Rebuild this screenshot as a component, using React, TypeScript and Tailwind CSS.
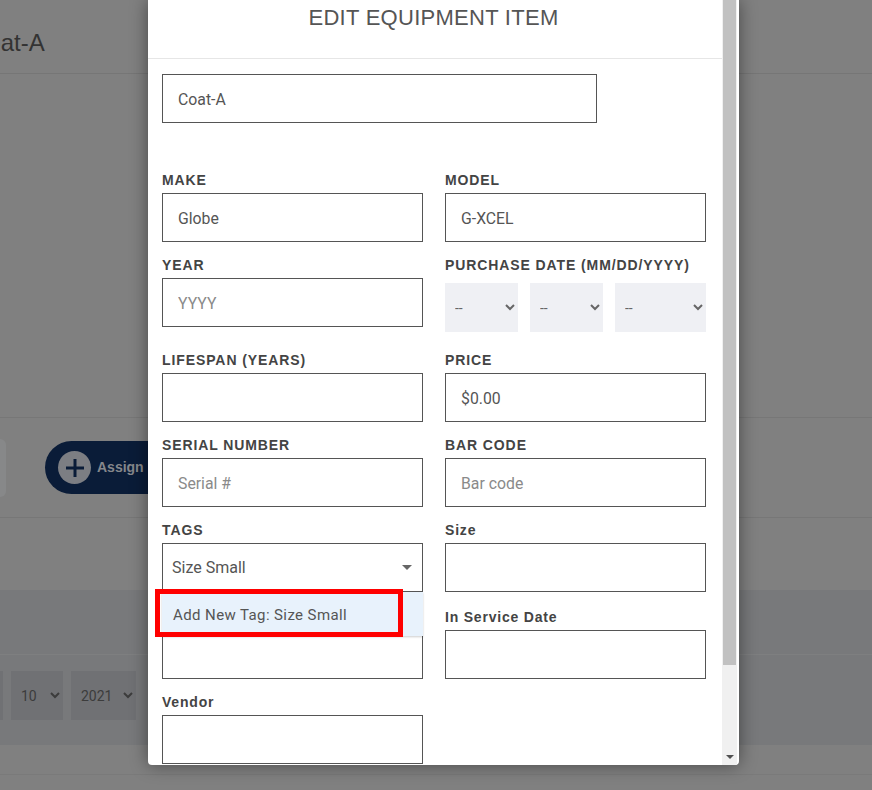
const sans = "font-['Liberation_Sans',Arial,sans-serif]";
const roboto = "font-['Roboto',Arial,sans-serif]";
const labelBase = `${sans} block pt-[2px] text-[14px] leading-[16px] font-bold text-[#444]`;
const inputBase = `${roboto} block h-[49px] border border-[#555] bg-white px-[15px] pt-[2px] text-[15.8px] text-[#555] outline-none`;

function Field({
  label,
  value,
  placeholder,
  labelClass = "uppercase tracking-[0.9px]",
}: {
  label?: string;
  value?: string;
  placeholder?: string;
  labelClass?: string;
}) {
  return (
    <div className="mb-[13px]">
      <label className={`${labelBase} ${labelClass} h-[23px]`}>{label}</label>
      <input
        readOnly
        value={value}
        placeholder={placeholder}
        className={`${inputBase} w-full placeholder:text-[#8a8a8a]`}
      />
    </div>
  );
}

function DateSelect({ className }: { className: string }) {
  return (
    <select className={`${roboto} h-[49px] bg-[#eff0f4] pl-[6px] text-[14px] text-[#666] outline-none ${className}`}>
      <option>--</option>
    </select>
  );
}

function PageBehind() {
  return (
    <div className={`${sans} h-[790px] overflow-hidden bg-[#808080]`}>
      <div className="h-[74px] border-b border-[#767676]">
        <h1 className="-ml-[30px] pt-[28px] text-[24px] leading-[30px] text-[#333]">Coat-A</h1>
      </div>
      <div className="h-[344px] border-b border-[#777]" />
      <div className="flex h-[100px] items-center gap-[39px] border-b border-[#777]">
        <div className="h-[58px] w-[6px] rounded-r-[6px] bg-[#878889]" />
        <button className="flex h-[53px] w-[180px] items-center gap-[6px] rounded-full bg-[#0a1c38] pl-[13px] text-[14px] font-bold whitespace-nowrap text-[#85878b]">
          <span className="flex h-[33px] w-[33px] shrink-0 items-center justify-center rounded-full bg-[#7c7e83]">
            <svg width="24" height="24" viewBox="0 0 24 24" fill="none" stroke="#0a1c38" strokeWidth="3">
              <path d="M12 3v18M3 12h18" />
            </svg>
          </span>
          Assign Item
        </button>
      </div>
      <div className="h-[72px]" />
      <div className="h-[155px] bg-[#78797b]">
        <div className="h-[65px] border-b border-[#7e7f80]" />
        <div className="flex gap-[8px] pt-[16px] text-[14px] text-[#3c3c3c]">
          <div className="h-[49px] w-[3px] bg-[#707174]" />
          <select className={`${roboto} h-[49px] w-[52px] bg-[#707174] pl-[6px] outline-none`}>
            <option>10</option>
          </select>
          <select className={`${roboto} h-[49px] w-[65px] bg-[#707174] pl-[6px] outline-none`}>
            <option>2021</option>
          </select>
        </div>
      </div>
      <div className="h-[30px] border-b border-[#7a7a7a]" />
    </div>
  );
}

function EditModal() {
  return (
    <div className="absolute top-0 left-[148px] flex h-[765px] w-[591px] overflow-hidden rounded-b-[4px] bg-white shadow-[0_0_18px_rgba(0,0,0,0.45)]">
      <div className="w-[574px] shrink-0">
        <h2 className={`${sans} h-[59px] border-b border-[#e6e6e6] pt-[5px] pr-[3px] text-center text-[22px] leading-[26px] tracking-[0.27px] text-[#555]`}>
          EDIT EQUIPMENT ITEM
        </h2>
        <div className="px-[14px] pt-[15px]">
          <input readOnly value="Coat-A" className={`${inputBase} mb-[47px] w-[435px]`} />
          <div className="grid w-[544px] grid-cols-[261px_261px] gap-x-[22px]">
            <Field label="Make" value="Globe" />
            <Field label="Model" value="G-XCEL" />
            <Field label="Year" placeholder="YYYY" />
            <div className="mb-[13px]">
              <label className={`${labelBase} h-[28px] tracking-[0.9px] uppercase`}>
                Purchase Date (MM/DD/YYYY)
              </label>
              <div className="mb-[5px] flex gap-[12px]">
                <DateSelect className="w-[73px]" />
                <DateSelect className="w-[73px]" />
                <DateSelect className="w-[91px]" />
              </div>
            </div>
            <Field label="Lifespan (Years)" />
            <Field label="Price" value="$0.00" />
            <Field label="Serial Number" placeholder="Serial #" />
            <Field label="Bar Code" placeholder="Bar code" />
            <div className="relative mb-[15px]">
              <label className={`${labelBase} h-[23px] tracking-[0.9px] uppercase`}>Tags</label>
              <div className={`${roboto} flex h-[49px] items-center justify-between border border-[#555] pr-[10px] pl-[9px] text-[16px] text-[#555]`}>
                Size Small
                <span className="h-0 w-0 border-x-[5px] border-t-[5px] border-x-transparent border-t-[#666]" />
              </div>
              <div className={`${roboto} absolute top-[72px] left-0 z-10 flex h-[44px] w-[261px] items-center bg-[#e8f2fc] pt-[2px] pl-[11px] text-[15px] tracking-[0.4px] text-[#555] shadow-[0_1px_2px_rgba(0,0,0,0.2)]`}>
                Add New Tag: Size Small
                <div className="absolute -top-[3px] -left-[7px] h-[48px] w-[248px] border-[5px] border-[#ff0000]" />
              </div>
            </div>
            <Field label="Size" labelClass="tracking-[0.8px]" />
            <Field />
            <Field label="In Service Date" labelClass="tracking-[0.8px]" />
            <Field label="Vendor" labelClass="tracking-[0.8px]" />
          </div>
        </div>
      </div>
      <div className="flex h-full w-[15px] flex-col bg-[#f0f0f0] px-px">
        <div className="h-[665px] bg-[#c1c1c1]" />
        <div className="flex flex-1 items-end justify-center pb-[6px]">
          <span className="h-0 w-0 border-x-[4px] border-t-[4px] border-x-transparent border-t-[#505050]" />
        </div>
      </div>
    </div>
  );
}

export default function App() {
  return (
    <div className="relative h-[790px] overflow-hidden">
      <PageBehind />
      <EditModal />
    </div>
  );
}
